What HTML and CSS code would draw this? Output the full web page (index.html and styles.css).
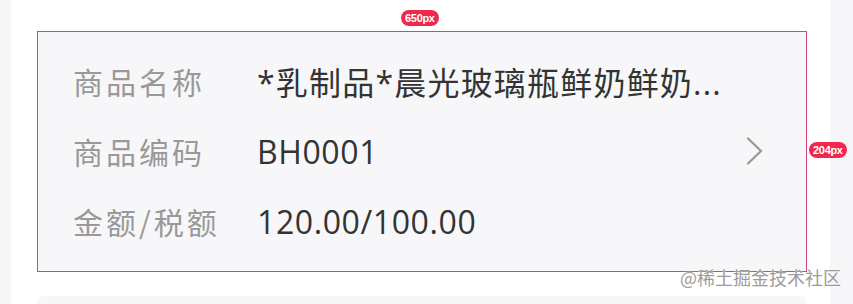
FILE: index.html
```html
<!DOCTYPE html>
<html lang="zh-CN">
<head>
<meta charset="utf-8">
<link rel="stylesheet" href="styles.css">
</head>
<body>
<div class="page">
  <div class="card">
    <div class="row">
      <span class="label">商品名称</span>
      <span class="value value-name">*乳制品*晨光玻璃瓶鲜奶鲜奶...</span>
    </div>
    <div class="row">
      <span class="label">商品编码</span>
      <span class="value">BH0001</span>
      <svg class="chev" width="18" height="28" viewBox="0 0 18 28"><path d="M2 1.5 L15 14 L2 26.5" fill="none" stroke="#9a9a9a" stroke-width="2.4" stroke-linecap="round" stroke-linejoin="round"/></svg>
    </div>
    <div class="row">
      <span class="label">金额/税额</span>
      <span class="value">120.00/100.00</span>
    </div>
    <span class="badge badge-w">650px</span>
    <span class="badge badge-h">204px</span>
  </div>
  <div class="next"></div>
  <span class="mark">@稀土掘金技术社区</span>
</div>
</body>
</html>
```
FILE: styles.css
```css
html, body {
  margin: 0;
  padding: 0;
}
body {
  background: #f6f6f8;
  font-family: "Open Sans", "Noto Sans CJK SC", sans-serif;
  overflow: hidden;
  height: 304px;
}
.page {
  position: relative;
  margin-left: 11px;
  width: 819px;
  height: 304px;
  box-sizing: border-box;
  padding: 31px 0 0 26px;
  background: #ffffff;
}
.card {
  position: relative;
  width: 770px;
  height: 241px;
  box-sizing: border-box;
  border: 1px solid #d8417e;
  background: #f7f7f9;
  padding: 14px 42px 0 35px;
}
.row {
  display: flex;
  align-items: center;
  height: 70px;
}
.label {
  width: 184px;
  flex: none;
  color: #999999;
  font-family: "Noto Sans CJK SC", sans-serif;
  font-size: 30px;
  letter-spacing: 3px;
}
.value {
  flex: 1;
  color: #333333;
  font-size: 32px;
  font-family: "Open Sans", "Noto Sans CJK SC", sans-serif;
  letter-spacing: 0.6px;
  white-space: nowrap;
}
.value-name {
  letter-spacing: 1.2px;
}
.chev {
  flex: none;
}
.badge {
  position: absolute;
  height: 16px;
  padding: 0 4px;
  border-radius: 8px;
  background: #f0284d;
  color: #ffffff;
  font-family: "Liberation Sans", sans-serif;
  font-weight: bold;
  font-size: 11px;
  line-height: 16px;
  letter-spacing: -0.3px;
  white-space: nowrap;
}
.badge-w {
  top: -22px;
  left: 363px;
}
.badge-h {
  top: 110px;
  left: 771px;
}
.next {
  margin-top: 24px;
  width: 770px;
  height: 8px;
  border-radius: 12px 12px 0 0;
  background: #f7f7f9;
}
.mark {
  position: absolute;
  left: 669px;
  top: 264px;
  color: #9c9c9c;
  font-family: "Noto Sans CJK SC", sans-serif;
  font-size: 18px;
  white-space: nowrap;
  text-shadow: 0 0 2px #ffffff;
}
```
